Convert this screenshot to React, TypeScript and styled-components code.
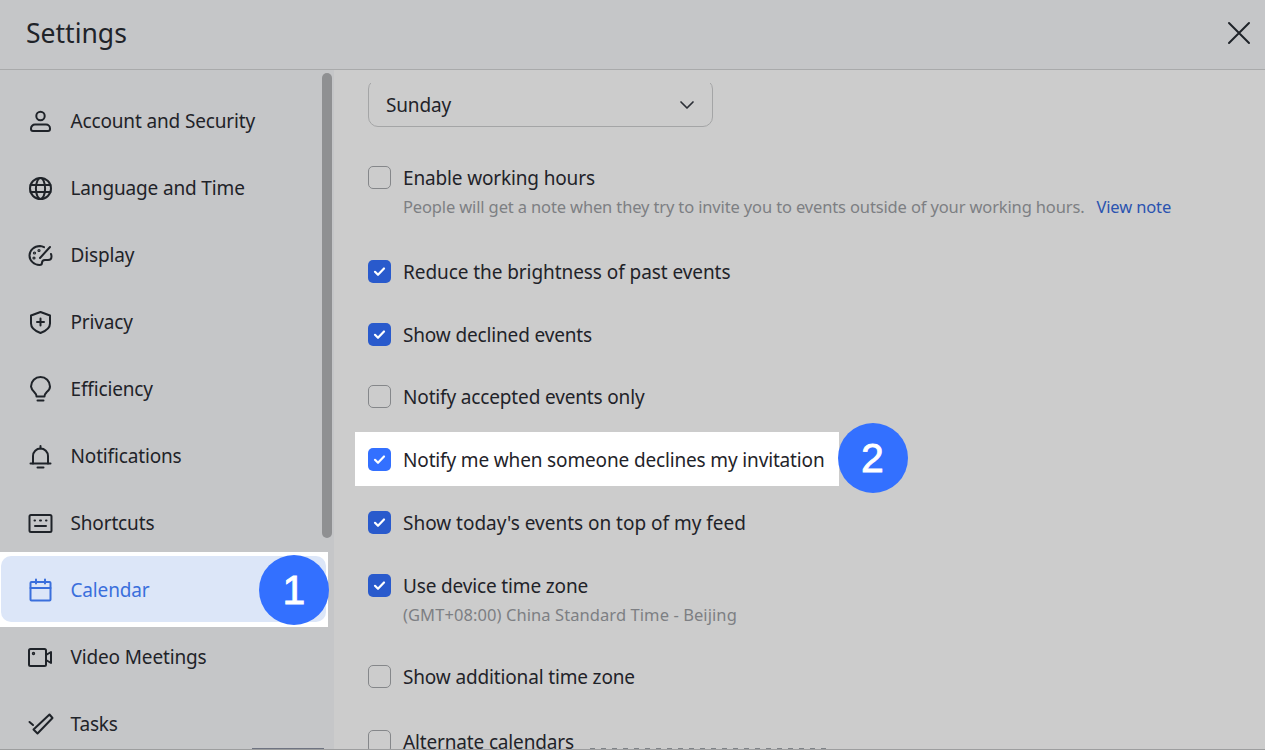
import React from 'react'
import styled, { createGlobalStyle } from 'styled-components'

const GlobalStyle = createGlobalStyle`
  html, body {
    margin: 0;
    height: 100%;
    overflow: hidden;
    background: #cccccc;
  }
  * { box-sizing: border-box; }
`

const Window = styled.div`
  position: relative;
  width: 1265px;
  height: 750px;
  display: flex;
  flex-direction: column;
  overflow: hidden;
  font-family: 'Noto Sans', 'Open Sans', sans-serif;
  font-size: 19px;
  letter-spacing: -0.15px;
  color: #1f2329;
  border-bottom: 1px solid #9d9e9f;
`

const Header = styled.header`
  flex: none;
  height: 70px;
  display: flex;
  align-items: center;
  justify-content: space-between;
  padding: 0 14px 4px 26px;
  background: #c5c6c8;
  border-bottom: 1px solid #a9aaab;
`

const Title = styled.h1`
  margin: 0;
  font-size: 26.5px;
  font-weight: 400;
  letter-spacing: 0;
  line-height: 34px;
`

const Body = styled.div`
  flex: 1;
  min-height: 0;
  display: flex;
`

const Sidebar = styled.nav`
  position: relative;
  flex: none;
  width: 334px;
  padding: 17px 0 0 1px;
  display: flex;
  flex-direction: column;
  gap: 1px;
  background: #c5c6c8;
  overflow: hidden;
`

const Thumb = styled.div`
  position: absolute;
  top: 3px;
  left: 322px;
  width: 10px;
  height: 465px;
  border-radius: 5px;
  background: #8f9092;
`

const NavSlot = styled.div<{ $marked?: boolean }>`
  position: relative;
  flex: none;
  width: 325px;
  height: 66px;
  ${p => p.$marked && 'z-index: 1; background: #fff; box-shadow: -2px 0 0 4px #fff, -2px 1px 0 4px #fff;'}
`

const NavItem = styled.div<{ $active?: boolean }>`
  height: 100%;
  display: flex;
  align-items: center;
  gap: 16.5px;
  padding: 2px 0 0 26px;
  border-radius: 10px;
  color: ${p => (p.$active ? '#3a6fdc' : '#1f2329')};
  background: ${p => (p.$active ? '#dce6f8' : 'transparent')};

  svg {
    flex: none;
    width: 27px;
    height: 27px;
  }
`

const Badge = styled.div`
  position: absolute;
  top: 50%;
  width: 70px;
  height: 70px;
  display: flex;
  align-items: center;
  justify-content: center;
  border-radius: 50%;
  background: #3370ff;
  color: #fff;
  font-family: 'Liberation Sans', Arial, sans-serif;
  font-size: 41px;
  letter-spacing: 0;
  line-height: 1;
  -webkit-text-stroke: 0.8px #fff;
  transform: translateY(-50%);
`

const NavBadge = styled(Badge)`
  right: -3px;
  margin-top: 1px;
`

const RowBadge = styled(Badge)`
  left: 100%;
  margin: -1px 0 0 -1px;
`

const Main = styled.main`
  flex: 1;
  min-width: 0;
  padding: 13px 0 0 34px;
  background: #cccccc;
  overflow: hidden;
`

const Select = styled.div`
  width: 345px;
  height: 48px;
  margin-top: -4px;
  display: flex;
  align-items: center;
  justify-content: space-between;
  padding: 4px 16px 0 17px;
  border: 1px solid #a4a5a6;
  border-radius: 10px;
  clip-path: inset(4px 0 0 0);

  svg {
    width: 18px;
    height: 18px;
    color: #2b2f36;
  }
`

const Options = styled.div`
  margin-top: 38px;
  display: flex;
  flex-direction: column;
  gap: 35.75px;
`

const Option = styled.div<{ $after?: number; $track?: number }>`
  display: flex;
  align-items: flex-start;
  gap: 12px;
  line-height: 27px;
  margin-bottom: ${p => p.$after ?? 0}px;
  letter-spacing: ${p => p.$track ?? -0.15}px;
`

const MarkedOption = styled(Option)`
  position: relative;
  width: fit-content;
  margin: -15px 0 -12px -13px;
  padding: 15px 14px 12px 13px;
  background: #fff;
`

const Box = styled.span<{ $checked?: boolean; $bright?: boolean }>`
  flex: none;
  width: 23px;
  height: 23px;
  margin-top: 1px;
  display: flex;
  align-items: center;
  justify-content: center;
  border-radius: 5px;
  border: ${p => (p.$checked ? 'none' : '1.5px solid #85878a')};
  background: ${p => (p.$checked ? (p.$bright ? '#3370ff' : '#295acc') : 'transparent')};

  svg {
    width: 15px;
    height: 15px;
    color: #fff;
  }
`

const Hint = styled.div<{ $wide?: boolean }>`
  margin: 0 0 2px;
  font-size: 16.5px;
  letter-spacing: ${p => (p.$wide ? '0.08px' : '-0.14px')};
  line-height: 29px;
  color: #7d7f83;
`

const NoteLink = styled.span`
  margin-left: 12px;
  color: #2a53b0;
`

const Close = styled.button`
  width: 24px;
  height: 24px;
  padding: 0;
  border: 0;
  background: none;
  color: #1f2329;

  svg {
    display: block;
    width: 24px;
    height: 24px;
  }
`

// the next rows of the scrolled panes just peek over the bottom edge
const Peek = styled.div<{ $left: number; $width: number; $dashed?: boolean }>`
  position: absolute;
  bottom: 0;
  left: ${p => p.$left}px;
  width: ${p => p.$width}px;
  height: 1px;
  background: ${p =>
    p.$dashed ? 'repeating-linear-gradient(90deg, #7f8388 0 5px, transparent 5px 11px)' : '#6f7482'};
`

const Glyph = ({ children }: { children: React.ReactNode }) => (
  <svg viewBox="0 0 27 27" fill="none" stroke="currentColor" strokeWidth="2" strokeLinecap="round" strokeLinejoin="round">
    {children}
  </svg>
)

const navItems: { label: string; icon: React.ReactNode; active?: boolean }[] = [
  {
    label: 'Account and Security',
    icon: (
      <Glyph>
        <circle cx="13.5" cy="8" r="4.2" />
        <path d="M8 16.500h11a4 4 0 0 1 4 4v.5a2 2 0 0 1-2 2H6a2 2 0 0 1-2-2v-.5a4 4 0 0 1 4-4z" />
      </Glyph>
    ),
  },
  {
    label: 'Language and Time',
    icon: (
      <Glyph>
        <circle cx="13.5" cy="13.5" r="10.5" />
        <ellipse cx="13.5" cy="13.5" rx="4.6" ry="10.5" />
        <path d="M3.500 10h20M3.500 17h20" />
      </Glyph>
    ),
  },
  {
    label: 'Display',
    icon: (
      <Glyph>
        <path d="M17 5.200A11 11 0 0 0 13 4C7 4 2.500 8.500 2.500 13.500S7 23 12.500 23c2 0 2.500-1 2.500-2.200 0-1.800 1-2.800 3-2.800h3c2 0 3.500-1.500 3.500-3.500 0-1-.2-1.800-.5-2.500" />
        <path d="M13 16l10-11" />
        <circle cx="7.500" cy="11" r=".6" />
        <circle cx="12" cy="8.500" r=".6" />
        <circle cx="7" cy="16" r=".6" />
      </Glyph>
    ),
  },
  {
    label: 'Privacy',
    icon: (
      <Glyph>
        <path d="M13.500 3l9.500 3.500v8c0 4.500-4 7.500-9.500 9.500C8 22 4 19 4 14.500v-8z" />
        <path d="M13.500 9.500v7M10 13h7" />
      </Glyph>
    ),
  },
  {
    label: 'Efficiency',
    icon: (
      <Glyph>
        <path d="M9.500 20.500c0-2-1-3.300-2.500-4.800A9.300 9.300 0 0 1 4 10.500a9.500 9.500 0 0 1 19 0c0 2-1 3.700-3 5.200-1.500 1.500-2.500 2.800-2.500 4.800z" />
        <path d="M10.500 24.500h6" />
      </Glyph>
    ),
  },
  {
    label: 'Notifications',
    icon: (
      <Glyph>
        <path d="M3.500 20.500h20" />
        <path d="M6 20.500V13a7.500 7.500 0 0 1 15 0v7.500" />
        <path d="M13.500 3v2.500M10.500 24.500h6" />
      </Glyph>
    ),
  },
  {
    label: 'Shortcuts',
    icon: (
      <Glyph>
        <rect x="2.500" y="5" width="22" height="17" rx="1.500" />
        <path d="M7.500 10.500h.5M13 10.500h1M19 10.500h.5M8 16h11" />
      </Glyph>
    ),
  },
  {
    label: 'Calendar',
    active: true,
    icon: (
      <Glyph>
        <rect x="3.500" y="5" width="20" height="18.500" rx="1" />
        <path d="M3.500 11h20M9 2.500v4M18 2.500v4" />
      </Glyph>
    ),
  },
  {
    label: 'Video Meetings',
    icon: (
      <Glyph>
        <rect x="2" y="5" width="17" height="17" rx="1.500" />
        <path d="M19 11l5-3v11l-5-3" />
        <circle cx="6.500" cy="9.500" r=".7" />
      </Glyph>
    ),
  },
  {
    label: 'Tasks',
    icon: (
      <Glyph>
        <path d="M2.500 11l3.500 3" />
        <path d="M22.500 3.500l3 3.500L10.500 22.500 6.500 18.500z" />
      </Glyph>
    ),
  },
]

const Tick = () => (
  <svg viewBox="0 0 15 15" fill="none" stroke="currentColor" strokeWidth="2.200" strokeLinecap="round" strokeLinejoin="round">
    <path d="M3 7.800l3 3 6-6.300" />
  </svg>
)

export default function App() {
  return (
    <Window>
      <GlobalStyle />
      <Header>
        <Title>Settings</Title>
        <Close aria-label="Close">
          <svg viewBox="0 0 24 24" fill="none" stroke="currentColor" strokeWidth="2" strokeLinecap="round">
            <path d="M2 2l20 20M22 2L2 22" />
          </svg>
        </Close>
      </Header>
      <Body>
        <Sidebar>
          <Thumb />
          {navItems.map(item => (
            <NavSlot key={item.label} $marked={item.active}>
              <NavItem $active={item.active}>
                {item.icon}
                {item.label}
              </NavItem>
              {item.active && <NavBadge>1</NavBadge>}
            </NavSlot>
          ))}
        </Sidebar>
        <Main>
          <Select>
            Sunday
            <svg viewBox="0 0 18 18" fill="none" stroke="currentColor" strokeWidth="1.700" strokeLinecap="round" strokeLinejoin="round">
              <path d="M3 6l6 6 6-6" />
            </svg>
          </Select>
          <Options>
            <Option>
              <Box />
              <div>
                Enable working hours
                <Hint>
                  People will get a note when they try to invite you to events outside of your working hours.
                  <NoteLink>View note</NoteLink>
                </Hint>
              </div>
            </Option>
            <Option $track={-0.07}>
              <Box $checked><Tick /></Box>
              Reduce the brightness of past events
            </Option>
            <Option>
              <Box $checked><Tick /></Box>
              Show declined events
            </Option>
            <Option>
              <Box />
              Notify accepted events only
            </Option>
            <MarkedOption>
              <Box $checked $bright><Tick /></Box>
              Notify me when someone declines my invitation
              <RowBadge>2</RowBadge>
            </MarkedOption>
            <Option $track={-0.02}>
              <Box $checked><Tick /></Box>
              Show today's events on top of my feed
            </Option>
            <Option $after={-2}>
              <Box $checked><Tick /></Box>
              <div>
                Use device time zone
                <Hint $wide>(GMT+08:00) China Standard Time - Beijing</Hint>
              </div>
            </Option>
            <Option $after={2}>
              <Box />
              Show additional time zone
            </Option>
            <Option>
              <Box />
              Alternate calendars
            </Option>
          </Options>
        </Main>
      </Body>
      <Peek $left={252} $width={72} />
      <Peek $left={590} $width={240} $dashed />
    </Window>
  )
}
